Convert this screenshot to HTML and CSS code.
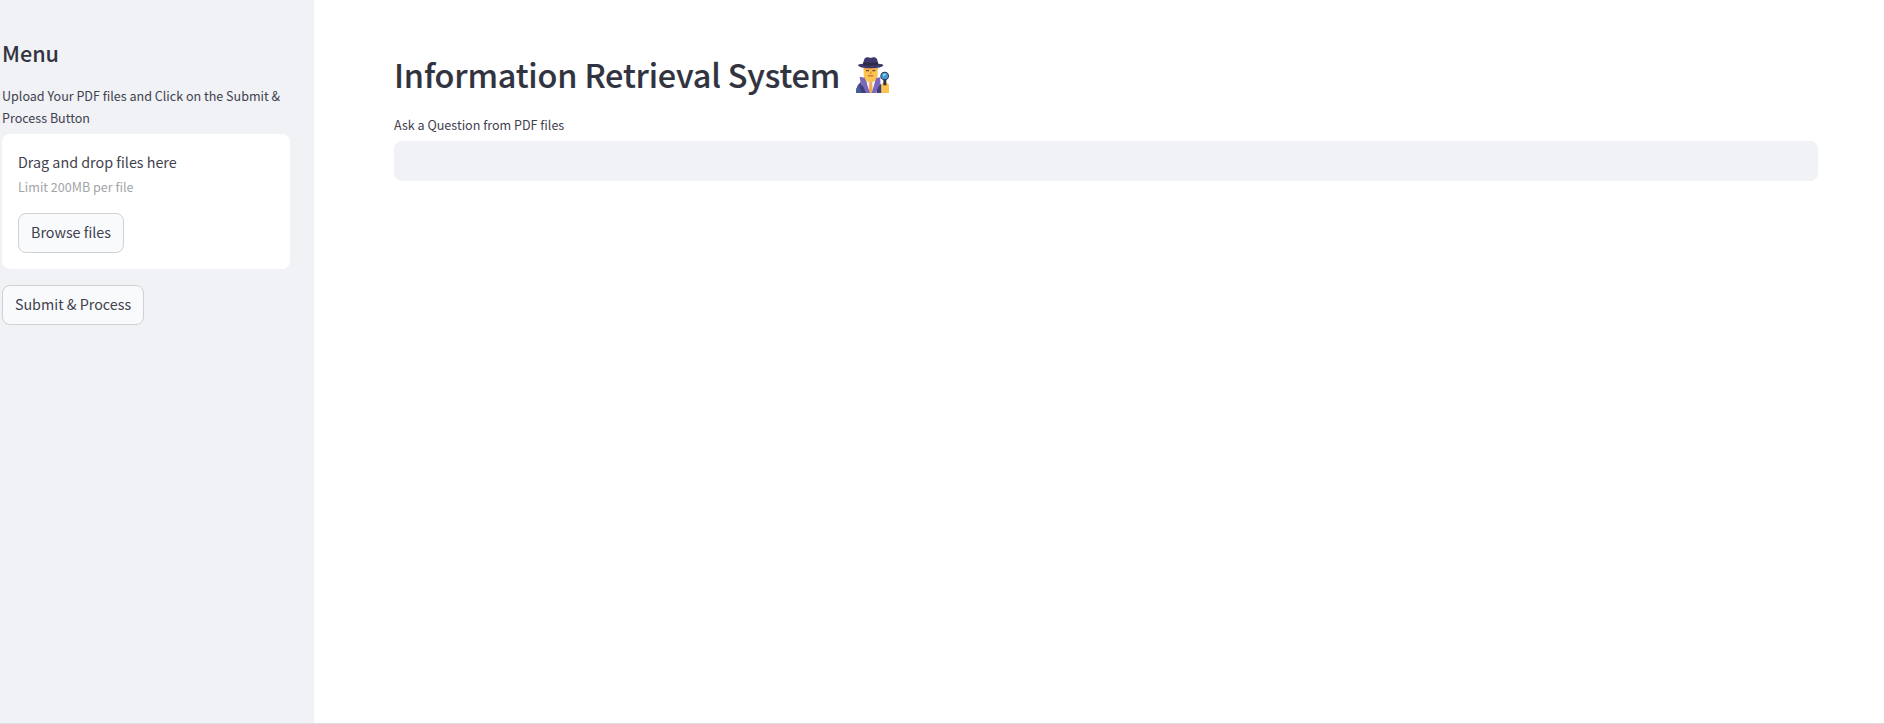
FILE: index.html
```
<!DOCTYPE html>
<html lang="en">
<head>
<meta charset="utf-8">
<title>Information Retrieval System</title>
<link rel="stylesheet" href="styles.css">
</head>
<body>
<div class="app">
  <aside class="sidebar">
    <h2 class="menu-title">Menu</h2>
    <p class="label upload-label">Upload Your PDF files and Click on the Submit &amp; Process Button</p>
    <section class="dropzone">
      <span class="drop-title">Drag and drop files here</span>
      <small class="drop-limit">Limit 200MB per file</small>
      <button class="btn browse">Browse files</button>
    </section>
    <button class="btn submit">Submit &amp; Process</button>
  </aside>
  <main class="main">
    <h1 class="title"><span>Information Retrieval System</span>
      <svg class="detective" viewBox="31 27 99 108" role="img" aria-label="Detective">
        <path fill="#453d78" d="M31 135q0-24 15-32l15-7h30l17 15v24z"/>
        <path fill="#3f5f9c" d="M31 135q0-18 9-25l8 25z"/>
        <path fill="#fcc34e" d="M54 58h42v22q0 24-21 24T54 80z"/>
        <path fill="#eda744" d="M54 60h42v5H54z"/>
        <path fill="#6d4b43" d="M61 66h9v4h-9zM80 66h9v4h-9z"/>
        <path fill="#e99a3b" d="M73 70h5v8h-5z"/>
        <path fill="#a75c36" d="M67 82h16v3H67z"/>
        <path fill="#f4edf1" d="M62 98l13 7 13-7 5 37H65z"/>
        <path fill="#fba651" d="M71 104h8l2 31H70z"/>
        <path fill="#7768bd" d="M42 86l15 3 16 46H61l-9-21-6-2zM104 88l-12 2-14 45h12l9-20 5-3z"/>
        <path fill="#3f386c" d="M52 47l4-14q3-7 12-5 7 3 14 0 9-2 12 5l4 14q16 1 15 5-3 9-38 9t-38-9q-1-4 15-5z"/>
        <path fill="#2c2d42" d="M53 43q22 4 44 0v7q-22 5-44 0z"/>
        <path fill="#fcc34e" d="M107 110q0-5 6-5h9q8 0 8 9v21h-23z"/>
        <path fill="#303044" d="M113 94h9v18h-9z"/>
        <circle cx="117" cy="84" r="13" fill="#303044"/>
        <circle cx="117" cy="84" r="10" fill="#419bd8"/>
        <path fill="#8bd2f1" d="M111 80l7-4 4 3-9 7z"/>
      </svg>
    </h1>
    <label class="label ask-label" for="question">Ask a Question from PDF files</label>
    <input class="question" id="question" type="text">
  </main>
</div>
</body>
</html>
```
FILE: styles.css
```
* { box-sizing: border-box; }
body {
  margin: 0;
  background: #fff;
  color: #3f414d;
  font-family: "Noto Sans CJK SC", "Open Sans", sans-serif;
}
.app {
  display: flex;
  height: 724px;
  border-bottom: 1px solid #dcdde0;
}
.sidebar {
  display: flex;
  flex-direction: column;
  align-items: flex-start;
  width: 314px;
  padding: 38px 24px 0 2px;
  background: #f0f2f6;
}
.menu-title {
  margin: 0;
  color: #31333f;
  font-size: 21.600px;
  font-weight: 500;
  line-height: 30px;
}
.label {
  margin: 0;
  font-size: 12.550px;
  line-height: 22px;
}
.upload-label { margin-top: 17px; }
.dropzone {
  display: flex;
  flex-direction: column;
  align-items: flex-start;
  width: 288px;
  height: 135px;
  margin-top: 5px;
  padding: 15px 16px 16px;
  border-radius: 8px;
  background: #fff;
}
.drop-title { font-size: 14.320px; line-height: 26px; }
.drop-limit { margin-top: 1px; color: #a3a4a9; font-size: 12.550px; line-height: 22px; }
.btn {
  height: 40px;
  padding: 0 0 2px;
  border: 1px solid #d0d1d5;
  border-radius: 8px;
  background: #f9fafc;
  color: inherit;
  font-family: inherit;
  font-size: 14.320px;
  line-height: 36px;
  white-space: nowrap;
}
.browse { width: 106px; margin-top: 15px; }
.submit { width: 142px; margin-top: 16px; }
.main {
  flex: 1;
  display: flex;
  flex-direction: column;
  padding: 52px 66px 0 80px;
}
.title {
  display: flex;
  align-items: center;
  gap: 15.500px;
  height: 44px;
  margin: 0;
  color: #31333f;
  font-size: 32.400px;
  font-weight: 500;
  letter-spacing: -0.170px;
  line-height: 44px;
  white-space: nowrap;
  -webkit-text-stroke: 0.15px;
}
.detective { width: 33px; height: 36px; margin-top: 2px; }
.ask-label { margin-top: 18px; }
.question {
  width: 1424px;
  height: 40px;
  margin-top: 5px;
  padding: 0 12px;
  border: 0;
  border-radius: 8px;
  background: #f0f2f6;
  font: inherit;
}
```
